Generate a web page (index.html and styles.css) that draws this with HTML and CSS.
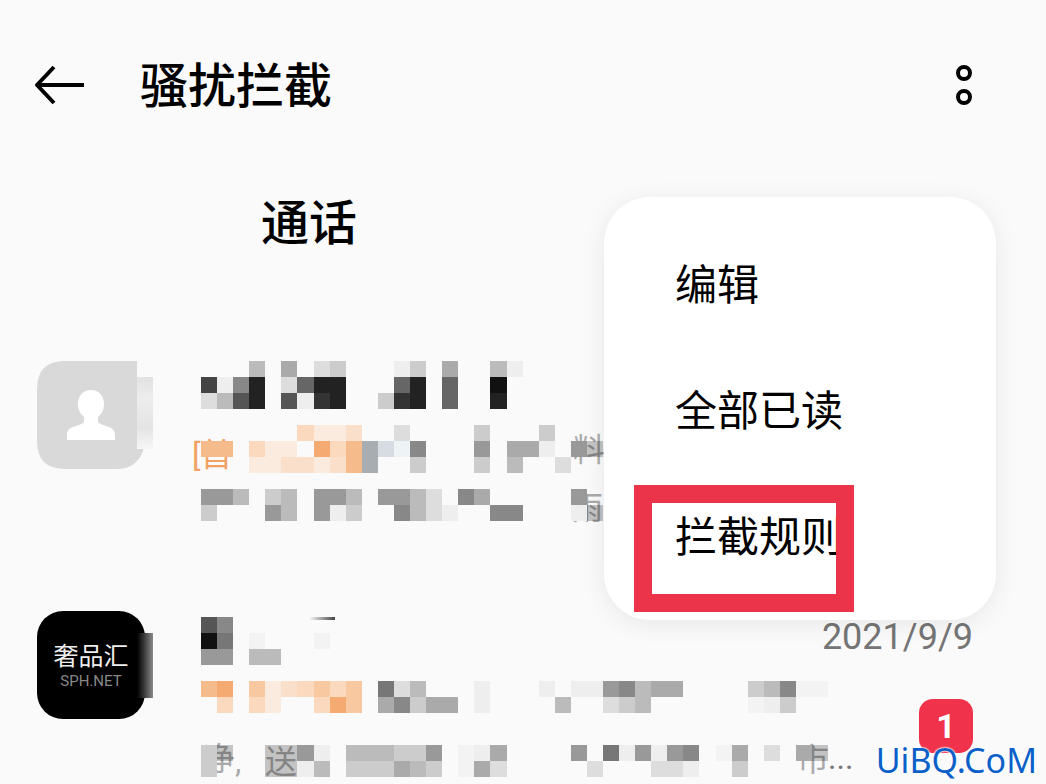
FILE: index.html
```html
<!DOCTYPE html>
<html lang="zh-CN">
<head>
    <meta charset="UTF-8">
    <meta name="viewport" content="width=device-width, initial-scale=1.0">
    <title>骚扰拦截</title>
    <link rel="stylesheet" href="styles.css">
</head>
<body>
    <header class="header">
        <button class="icon-button" aria-label="返回">
            <svg width="50" height="40" viewBox="0 0 50 40" fill="none" stroke="#000" stroke-width="4">
                <path d="M20 2 L3 20 L20 38 M3 20 H50" stroke-linejoin="round"/>
            </svg>
        </button>
        <h1 class="title">骚扰拦截</h1>
        <button class="icon-button" aria-label="更多">
            <svg width="18" height="42" viewBox="0 0 18 42" fill="none" stroke="#000" stroke-width="4">
                <circle cx="9" cy="9" r="6"/>
                <circle cx="9" cy="33" r="6"/>
            </svg>
        </button>
    </header>

    <nav class="tabs">
        <a href="#calls" class="tab">通话</a>
    </nav>

    <main class="list" id="calls">
        <article class="item">
            <svg class="avatar" width="116" height="108" viewBox="0 0 116 108">
                <defs>
                    <linearGradient id="fade-light" x1="0" y1="0" x2="0" y2="1">
                        <stop offset="0" stop-color="#e2e2e2"/>
                        <stop offset="0.3" stop-color="#ededed"/>
                        <stop offset="0.7" stop-color="#e4e4e4"/>
                        <stop offset="1" stop-color="#f6f6f6"/>
                    </linearGradient>
                </defs>
                <path d="M28 0 H100 V86 Q108 84 106 90 Q99 108 80 108 H28 Q0 108 0 80 V28 Q0 0 28 0Z" fill="#d9d9d9"/>
                <rect x="100" y="16" width="16" height="72" fill="url(#fade-light)"/>
                <path d="M54 29 C62 29 67 35 67 43 C67 50 64 53 61 56 V61 C65 66 78 64 78 74 V79 H30 V74 C30 64 43 66 47 61 V56 C44 53 41 50 41 43 C41 35 46 29 54 29Z" fill="#fff"/>
            </svg>
            <div class="content">
                <svg class="mosaic tall" data-cells="...b.a.dc...ec.a..be|4e82.d622...62.6..1|db52.5e32..c32.6..2"></svg>
                <svg class="mosaic tall" data-cells="......rtts..d....c...c|pp.rtt.orpuvw8...9.aae.9y|...ttsstspu..c...c.b..d">
                    <text x="-9" y="41" class="tag">[首</text>
                    <text x="372" y="36">料</text>
                </svg>
                <svg class="mosaic" data-cells="99b.cb.99b.99bd.8a.....9|c...9b.9ec..8bde..88...ey">
                    <text x="370" y="30">雨</text>
                </svg>
            </div>
        </article>

        <article class="item item-short">
            <svg class="avatar" width="116" height="108" viewBox="0 0 116 108">
                <defs>
                    <linearGradient id="fade-dark" x1="0" y1="0" x2="1" y2="0">
                        <stop offset="0" stop-color="#000"/>
                        <stop offset="0.4" stop-color="#333"/>
                        <stop offset="1" stop-color="#8a8a8a"/>
                    </linearGradient>
                </defs>
                <rect width="108" height="108" rx="26" fill="#000"/>
                <rect x="100" y="22" width="16" height="65" fill="url(#fade-dark)"/>
                <text x="54" y="54" class="logo-name">奢品汇</text>
                <text x="54" y="75" class="logo-site">SPH.NET</text>
            </svg>
            <div class="content">
                <svg class="mosaic tall" data-cells="58|17.z...z|99.bb">
                    <defs>
                        <linearGradient id="stroke-fade">
                            <stop offset="0" stop-color="#fafafa"/>
                            <stop offset="1" stop-color="#444"/>
                        </linearGradient>
                    </defs>
                    <rect x="108" y="0" width="26" height="3" fill="url(#stroke-fade)"/>
                </svg>
                <time class="date" datetime="2021-09-09">2021/9/9</time>
                <svg class="mosaic tall" data-cells="po.qtsrqrq.7db...e...e.ee98baa....cb8zz|.r.rt..roq.a8caa.e....b..dcb......zec"></svg>
                <svg class="mosaic" data-cells="cy..yy9e.bbbcc9.zea....9.7e9e98.za.d.ay|c...yyeb.cccabc.zad.....d...dde..c">
                    <text x="2" y="25">净</text>
                    <text x="34" y="27">,</text>
                    <text x="64" y="28">送</text>
                    <text x="596" y="26">市</text>
                    <text x="627" y="24" class="ellipsis">...</text>
                </svg>
                <span class="badge">1</span>
            </div>
        </article>
    </main>

    <div class="menu">
        <button class="menu-item">编辑</button>
        <button class="menu-item">全部已读</button>
        <button class="menu-item marked">拦截规则</button>
    </div>

    <div class="watermark">UiBQ.CoM</div>

    <script src="script.js"></script>
</body>
</html>
```
FILE: styles.css
```css
* {
    box-sizing: border-box;
}
body {
    position: relative;
    margin: 0;
    min-height: 100vh;
    background-color: #fafafa;
    color: #000;
    font-family: Roboto, "Noto Sans CJK SC", sans-serif;
}
button {
    border: none;
    background: none;
    padding: 0;
    color: inherit;
    font-family: inherit;
    cursor: pointer;
}
.header {
    display: flex;
    align-items: center;
    height: 170px;
    padding: 0 73px 0 34px;
}
.icon-button svg {
    display: block;
}
.title {
    flex: 1;
    margin: 0 0 0 56px;
    padding-top: 4px;
    font-size: 48px;
    line-height: 64px;
    font-weight: 500;
}
.tabs {
    display: flex;
    height: 108px;
    padding-left: 261px;
    align-items: center;
}
.tab {
    color: inherit;
    font-size: 48px;
    line-height: 64px;
    font-weight: 500;
    text-decoration: none;
}

/* blocked calls */
.list {
    display: grid;
    gap: 90px;
    padding: 83px 73px 0 37px;
}
.item {
    display: flex;
    gap: 48px;
}
.avatar {
    flex: none;
}
.content {
    flex: 1;
    display: grid;
    grid-template-columns: 1fr auto;
    row-gap: 16px;
    align-content: start;
}
.item-short .content {
    padding-top: 6px;
}
.mosaic {
    grid-column: 1;
    display: block;
    width: 100%;
    height: 32px;
    overflow: visible;
    fill: #aaa;
    font-size: 32px;
}
.mosaic.tall {
    height: 48px;
}
.tag {
    fill: #f0a266;
}
.ellipsis {
    fill: #777;
}
.logo-name {
    fill: #eee;
    font-size: 25px;
    text-anchor: middle;
}
.logo-site {
    fill: #888;
    font-size: 15px;
    text-anchor: middle;
}
.date {
    grid-column: 2;
    grid-row: 1;
    color: #757575;
    font-size: 36px;
    line-height: 40px;
}
.badge {
    grid-column: 2;
    grid-row: 2 / 4;
    justify-self: end;
    width: 54px;
    height: 54px;
    margin-top: 18px;
    border-radius: 14px;
    background-color: #f0324a;
    color: #fff;
    font-size: 34px;
    line-height: 54px;
    font-weight: 700;
    text-align: center;
}

/* popup menu */
.menu {
    position: absolute;
    top: 197px;
    right: 50px;
    width: 392px;
    padding: 26px 0 19px;
    border-radius: 46px;
    background-color: #fff;
    box-shadow: 0 4px 24px rgba(0, 0, 0, 0.08);
}
.menu-item {
    position: relative;
    display: block;
    width: 100%;
    height: 126px;
    padding-left: 71px;
    font-size: 42px;
    line-height: 60px;
    text-align: left;
}
.marked::after {
    content: "";
    box-sizing: border-box;
    position: absolute;
    top: 10px;
    left: 30px;
    width: 220px;
    height: 127px;
    border: 18px solid #eb3449;
}
.watermark {
    position: absolute;
    right: 9px;
    bottom: 2px;
    color: #0b5fc8;
    font-family: "Noto Sans", sans-serif;
    font-size: 34px;
    line-height: 44px;
    text-shadow: 0 0 2px #fff, 0 0 2px #fff, 0 0 2px #fff;
}
```
FILE: script.js
```js
// Draws the pixelated names and messages. Rows are split by "|", one
// character per cell: a hex digit is a grey level, other letters are below.
const CELL_WIDTH = 16.08;
const CELL_HEIGHT = 16;
const TINTS = {
    o: '#f4aa70',
    p: '#f6bb8a',
    q: '#f8c8a0',
    r: '#fad9bf',
    s: '#fae0cb',
    t: '#fbeade',
    u: '#a8adb1',
    v: '#d6dce2',
    w: '#eef3f6',
    y: 'rgba(0, 0, 0, 0.22)',
    z: '#f3f3f3'
};

document.querySelectorAll('.mosaic').forEach(svg => {
    svg.dataset.cells.split('|').forEach((row, y) => {
        [...row].forEach((code, x) => {
            if (code === '.') {
                return;
            }
            const left = Math.round(x * CELL_WIDTH);
            const right = Math.round((x + 1) * CELL_WIDTH);
            const rect = document.createElementNS('http://www.w3.org/2000/svg', 'rect');
            rect.setAttribute('x', left);
            rect.setAttribute('y', y * CELL_HEIGHT);
            rect.setAttribute('width', right - left);
            rect.setAttribute('height', CELL_HEIGHT);
            rect.setAttribute('fill', TINTS[code] || '#' + code.repeat(3));
            svg.appendChild(rect);
        });
    });
});
```
